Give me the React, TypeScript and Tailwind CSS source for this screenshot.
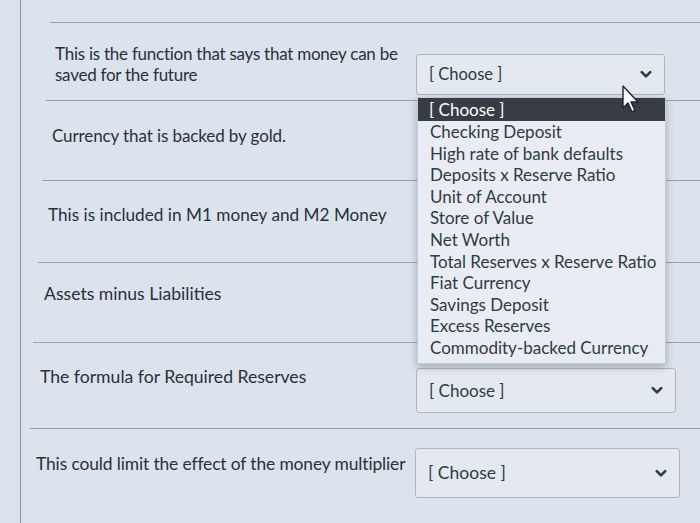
import React from "react";

const Chevron = () => (
  <svg width="12" height="9" viewBox="0 0 12 9" className="shrink-0">
    <path d="M1.8 2.2 L6 6.4 L10.2 2.2" fill="none" stroke="#2d3b45" strokeWidth="2.6" strokeLinecap="round" strokeLinejoin="round" />
  </svg>
);

const Select = ({ w, h, pad, text }: { w: string; h: string; pad?: string; text: string }) => (
  <div className={`${w} ${h} ${pad ?? ""} ${text} shrink-0 flex items-center justify-between pl-3 pr-3 rounded-[3px] border border-[#aeb6c0] bg-[#e4e9f0] text-[#2d3b45]`}>
    <span>[ Choose ]</span>
    <Chevron />
  </div>
);

const options = [
  "Checking Deposit",
  "High rate of bank defaults",
  "Deposits x Reserve Ratio",
  "Unit of Account",
  "Store of Value",
  "Net Worth",
  "Total Reserves x Reserve Ratio",
  "Fiat Currency",
  "Savings Deposit",
  "Excess Reserves",
  "Commodity-backed Currency",
];

export default function App() {
  return (
    <div
      className="relative w-[700px] h-[523px] overflow-hidden bg-[#dce3ec] text-[#26323b]"
      style={{ fontFamily: "Lato, 'Open Sans', sans-serif" }}
    >
      <div className="absolute left-[20px] top-0 h-[523px] w-px bg-[#8a929c]" />
      <div className="flex flex-col pt-[22px]">
        {/* Row 1 */}
        <div className="ml-[50px] border-t border-[#9aa3ad] h-[78px] flex items-start pl-[5px] pt-[20px]">
          <div className="w-[361px] text-[17px] leading-[21px] tracking-[-0.25px]">
            This is the function that says that money can be saved for the future
          </div>
          <Select w="w-[249px]" h="h-[41px]" pad="mt-[11px]" text="text-[16.5px]" />
        </div>
        {/* Row 2 */}
        <div className="ml-[46px] border-t border-[#9aa3ad] h-[80px] flex items-start pl-[6px] pt-[24px]">
          <div className="text-[17px] leading-[21px] tracking-[-0.1px]">Currency that is backed by gold.</div>
        </div>
        {/* Row 3 */}
        <div className="ml-[42px] border-t border-[#9aa3ad] h-[82px] flex items-start pl-[6px] pt-[23px]">
          <div className="text-[17.2px] leading-[21px]">This is included in M1 money and M2 Money</div>
        </div>
        {/* Row 4 */}
        <div className="ml-[38px] border-t border-[#9aa3ad] h-[80px] flex items-start pl-[6px] pt-[20px]">
          <div className="text-[17.6px] leading-[21px]">Assets minus Liabilities</div>
        </div>
        {/* Row 5 */}
        <div className="ml-[33px] border-t border-[#9aa3ad] h-[86px] flex items-start pl-[7px] pt-[23px]">
          <div className="w-[376px] text-[17.6px] leading-[21px]">The formula for Required Reserves</div>
          <Select w="w-[260px]" h="h-[45px]" pad="mt-[2px]" text="text-[17px]" />
        </div>
        {/* Row 6 */}
        <div className="ml-[30px] border-t border-[#9aa3ad] h-[100px] flex items-start pl-[6px] pt-[23px]">
          <div className="w-[379px] whitespace-nowrap text-[17.4px] leading-[22px] tracking-[-0.12px] pt-[1px]">
            This could limit the effect of the money multiplier
          </div>
          <Select w="w-[265px]" h="h-[50px]" pad="-mt-[4px]" text="text-[17.5px]" />
        </div>
      </div>

      {/* Dropdown list */}
      <div className="absolute left-[417px] top-[97px] w-[249px] bg-[#e9edf3] border border-[#c3cad3] shadow-[0_3px_8px_rgba(0,0,0,0.25)] pb-[4px] text-[17px] leading-[21.6px] text-[#2d3b45]">
        <div className="bg-[#383c45] text-white pl-[11px] h-[23px] leading-[23px]">[ Choose ]</div>
        {options.map((o) => (
          <div key={o} className="pl-[12px] whitespace-nowrap">
            {o}
          </div>
        ))}
      </div>

      {/* Cursor */}
      <svg className="absolute left-[621px] top-[84px]" width="20" height="30" viewBox="0 0 20 30">
        <path d="M2 2 L2 24 L7 19 L11 28 L14 26.5 L10 18 L17 18 Z" fill="#ffffff" stroke="#1f2329" strokeWidth="1.4" strokeLinejoin="round" />
      </svg>
    </div>
  );
}
